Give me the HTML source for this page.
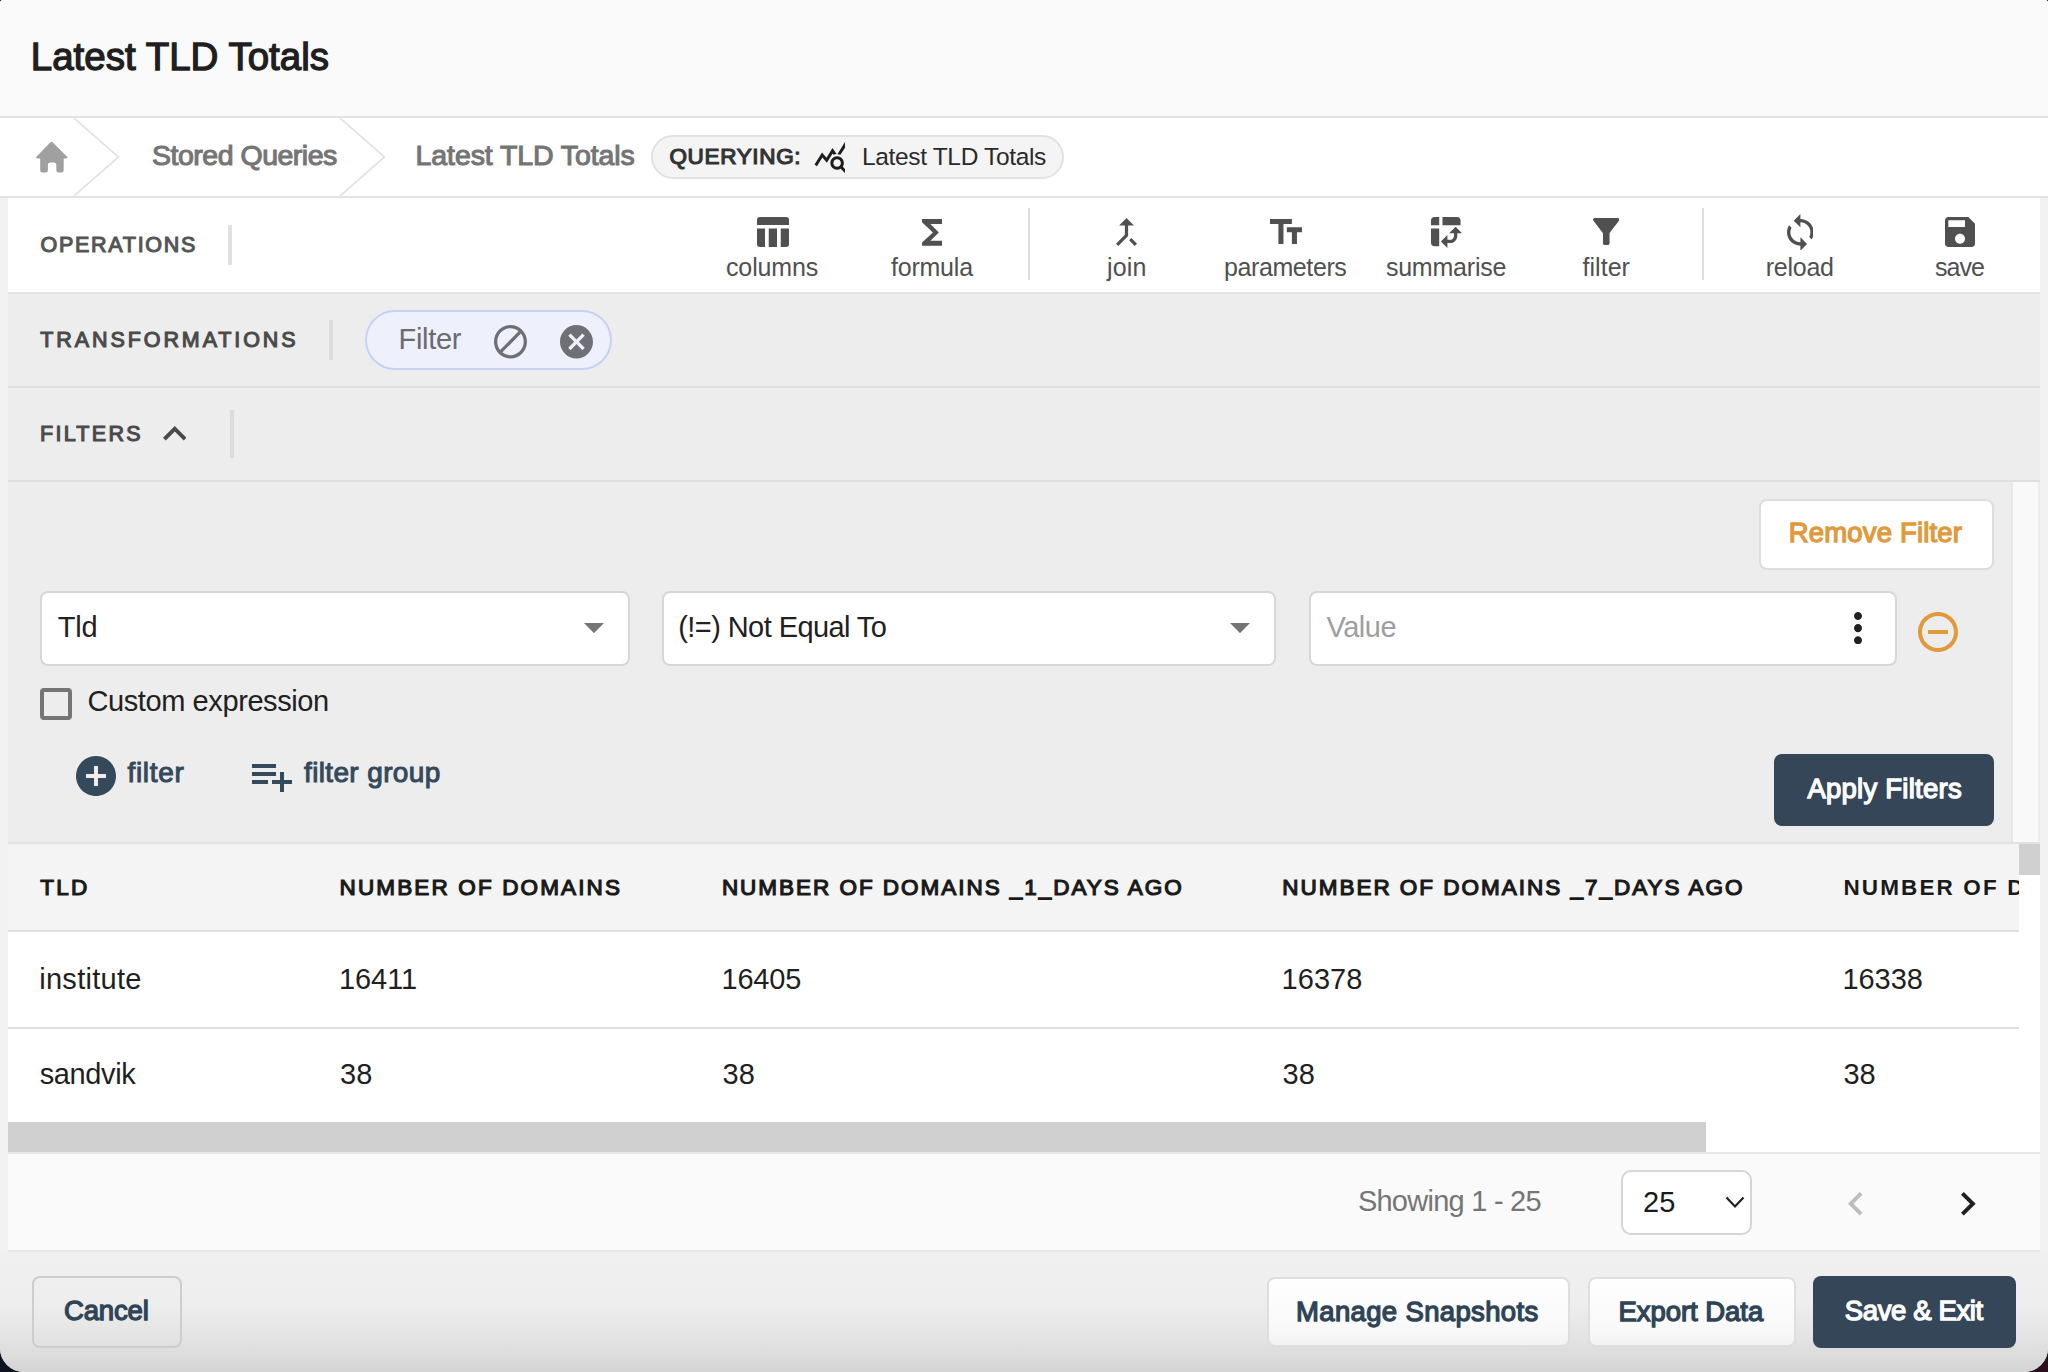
<!DOCTYPE html>
<html><head><meta charset="utf-8"><title>Latest TLD Totals</title>
<style>
html,body{margin:0;padding:0;}
body{width:2048px;height:1372px;overflow:hidden;position:relative;background:linear-gradient(to right,#0b1420 0,#0b1420 50%,#2a0f1f 50%,#2a0f1f 100%);font-family:"Liberation Sans",sans-serif;}
#modal{position:absolute;left:0;top:0;width:2048px;height:1372px;overflow:hidden;border-radius:3px 3px 24px 24px;background:#fafafa;}
.r{position:absolute;}
.t{position:absolute;white-space:nowrap;line-height:1;font-family:"Liberation Sans",sans-serif;}
</style></head><body><div id="modal">
<div class='r' style='left:0px;top:0px;width:2048px;height:116px;background:#fafafa;'></div>
<div class='r' style='left:0px;top:116px;width:2048px;height:2px;background:#e3e3e3;'></div>
<div class='t' style='left:30.8px;top:37.8px;font-size:38.5px;font-weight:400;letter-spacing:0.0px;color:#1f1f1f;-webkit-text-stroke:1.3px #1f1f1f;'>Latest TLD Totals</div>
<div class='r' style='left:0px;top:118px;width:2048px;height:78px;background:#ffffff;'></div>
<div class='r' style='left:0px;top:196px;width:2048px;height:2px;background:#e3e3e3;'></div>
<svg class='r' style='left:30px;top:136px;width:44px;height:42px' viewBox='30 136 44 42'><path fill='#a0a0a0' d='M50.2 142.4Q51.5 141.1 52.8 142.4L66.6 156.2Q68.3 158.1 66.2 158.6L63.7 158.6L63.7 170.1Q63.7 172.6 61.2 172.6L58.8 172.6Q56.3 172.6 56.3 170.1L56.3 165.1Q56.3 162.6 53.8 162.6L50.4 162.6Q47.9 162.6 47.9 165.1L47.9 170.1Q47.9 172.6 45.4 172.6L42.7 172.6Q40.2 172.6 40.2 170.1L40.2 158.6L37.3 158.6Q35.2 158.1 36.9 156.2Z'/></svg>
<svg class='r' style='left:0;top:118px;width:400px;height:78px' viewBox='0 0 400 78'><polyline points='74,0 118.5,39 74,78' fill='none' stroke='#e3e3e3' stroke-width='1.7'/><polyline points='340,0 384.5,39 340,78' fill='none' stroke='#e3e3e3' stroke-width='1.7'/></svg>
<div class='t' style='left:152px;top:141.0px;font-size:28.5px;font-weight:400;letter-spacing:-0.49px;color:#757575;-webkit-text-stroke:1.1px #757575;'>Stored Queries</div>
<div class='t' style='left:415.6px;top:141.0px;font-size:28.5px;font-weight:400;letter-spacing:-0.1px;color:#757575;-webkit-text-stroke:1.1px #757575;'>Latest TLD Totals</div>
<div class='r' style='left:651px;top:135px;width:413px;height:44px;background:#f4f4f4;border:2px solid #e2e2e2;box-sizing:border-box;border-radius:22px'></div>
<div class='t' style='left:669.4px;top:145.5px;font-size:22.5px;font-weight:400;letter-spacing:0.67px;color:#333333;-webkit-text-stroke:1.2px #333333;'>QUERYING:</div>
<div class='r' style='left:805px;top:130px;width:40px;height:50px;overflow:hidden'><svg class='r' style='left:7.899999999999977px;top:9.099999999999994px;width:36.0px;height:36.0px;' viewBox='0 0 24 24' preserveAspectRatio='none'><path fill='#1e1e1e' d='M19.88 18.47c.44-.7.7-1.51.7-2.39 0-2.49-2.01-4.5-4.5-4.5s-4.5 2.010-4.5 4.5 2.01 4.5 4.49 4.5c.88 0 1.7-.26 2.39-.7L21.590 23 23 21.59l-3.12-3.12zm-3.8.11c-1.38 0-2.5-1.12-2.5-2.5s1.12-2.5 2.5-2.5 2.5 1.12 2.5 2.5-1.12 2.5-2.5 2.5zm-.36-8.5c-.74.02-1.45.18-2.1.45l-.55-.83-3.8 6.18-3.01-3.52-3.63 5.81L1 17l5-8 3 3.5L13 6l2.72 4.08zm2.59.5c-.64-.28-1.33-.45-2.05-.49L21.38 2 23 3.18l-4.69 7.4z'/></svg></div>
<div class='t' style='left:862px;top:144.5px;font-size:24.5px;font-weight:400;letter-spacing:-0.34px;color:#2a2a2a;'>Latest TLD Totals</div>
<div class='r' style='left:0px;top:198px;width:2048px;height:1054px;background:#f2f2f2;'></div>
<div class='r' style='left:8px;top:198px;width:2032px;height:94px;background:#ffffff;'></div>
<div class='r' style='left:8px;top:292px;width:2032px;height:2px;background:#e4e4e4;'></div>
<div class='t' style='left:40.5px;top:234.9px;font-size:21.5px;font-weight:400;letter-spacing:1.72px;color:#555555;-webkit-text-stroke:1.1px #555555;'>OPERATIONS</div>
<div class='r' style='left:228px;top:225px;width:4px;height:40px;background:#e0e0e0;'></div>
<svg class='r' style='left:757px;top:217px;width:32px;height:30px' viewBox='0 0 32 30'><path fill='#505050' d='M3 0h26a3 3 0 0 1 3 3v5H0V3a3 3 0 0 1 3-3z M0 11.5h8v18.5H3a3 3 0 0 1-3-3z M11.75 11.5h8.25v18.5h-8.25z M23.75 11.5H32V27a3 3 0 0 1-3 3h-5.25z'/></svg>
<svg class='r' style='left:922px;top:218.75px;width:20.200000000000045px;height:26.849999999999994px;' viewBox='6 4 12 16' preserveAspectRatio='none'><path fill='#505050' d='M18 4H6v2l6.5 6L6 18v2h12v-3h-7l5-5-5-5h7z'/></svg>
<div class='r' style='left:1028px;top:208px;width:2px;height:72px;background:#e0e0e0;'></div>
<svg class='r' style='left:1115.6px;top:218px;width:21.0px;height:28px;' viewBox='5.59 3.5 12.82 16.91' preserveAspectRatio='none'><path fill='#505050' d='M17 20.41L18.41 19 15 15.59 13.59 17 17 20.41zM7.5 8H11v5.59L5.59 19 7 20.41l6-6V8h3.5L12 3.5 7.5 8z'/></svg>
<svg class='r' style='left:1270px;top:218.75px;width:32px;height:25.0px;' viewBox='2.5 4 19.0 15' preserveAspectRatio='none'><path fill='#505050' d='M2.5 4v3h5v12h3V7h5V4h-13zm19 5h-9v3h3v7h3v-7h3V9z'/></svg>
<svg class='r' style='left:1431px;top:217px;width:31.200000000000045px;height:31px;' viewBox='3 3 19 19' preserveAspectRatio='none'><path fill='#505050' d='M10 8h11V5c0-1.1-.9-2-2-2h-9v5zM3 8h5V3H5c-1.1 0-2 .9-2 2v3zm2 13h3V10H3v9c0 1.1.9 2 2 2zm8 1l-4-4 4-4zm1-9l4-4 4 4zm.58 6H13v-2h1.58c1.33 0 2.42-1.08 2.42-2.42V13h2v1.58c0 2.44-1.98 4.42-4.42 4.42z'/></svg>
<svg class='r' style='left:1592.7px;top:218.4px;width:26.5px;height:26.900000000000006px;' viewBox='4.0 4 16.0 16' preserveAspectRatio='none'><path fill='#505050' d='M4.25 5.61C6.27 8.2 10 13 10 13v6c0 .55.45 1 1 1h2c.55 0 1-.45 1-1v-6s3.72-4.8 5.74-7.39c.51-.66.04-1.61-.79-1.61H5.04c-.83 0-1.3.95-.79 1.61z'/></svg>
<div class='r' style='left:1702px;top:208px;width:2px;height:72px;background:#e0e0e0;'></div>
<svg class='r' style='left:1786.5px;top:213.5px;width:26.799999999999955px;height:36.69999999999999px;' viewBox='4 1 16 22' preserveAspectRatio='none'><path fill='#505050' d='M12 4V1L8 5l4 4V6c3.31 0 6 2.69 6 6 0 1.01-.25 1.97-.7 2.8l1.46 1.46C19.54 15.03 20 13.57 20 12c0-4.42-3.58-8-8-8zm0 14c-3.31 0-6-2.690-6-6 0-1.01.25-1.97.7-2.8L5.24 7.74C4.46 8.97 4 10.43 4 12c0 4.42 3.58 8 8 8v3l4-4-4-4v3z'/></svg>
<svg class='r' style='left:1945px;top:217px;width:30px;height:30px;' viewBox='3 3 18 18' preserveAspectRatio='none'><path fill='#505050' d='M17 3H5c-1.11 0-2 .9-2 2v14c0 1.1.89 2 2 2h14c1.1 0 2-.9 2-2V7l-4-4zm-5 16c-1.66 0-3-1.34-3-3s1.34-3 3-3 3 1.34 3 3-1.34 3-3 3zm3-10H5V5h10v4z'/></svg>
<div class='t' style='left:726px;top:255.0px;font-size:25px;font-weight:400;letter-spacing:-0.13px;color:#505050;'>columns</div>
<div class='t' style='left:891px;top:255.0px;font-size:25px;font-weight:400;letter-spacing:-0.22px;color:#505050;'>formula</div>
<div class='t' style='left:1107px;top:255.0px;font-size:25px;font-weight:400;letter-spacing:0.13px;color:#505050;'>join</div>
<div class='t' style='left:1224px;top:255.0px;font-size:25px;font-weight:400;letter-spacing:-0.4px;color:#505050;'>parameters</div>
<div class='t' style='left:1385.9px;top:255.0px;font-size:25px;font-weight:400;letter-spacing:-0.21px;color:#505050;'>summarise</div>
<div class='t' style='left:1582.5px;top:255.0px;font-size:25px;font-weight:400;letter-spacing:0.04px;color:#505050;'>filter</div>
<div class='t' style='left:1765.8px;top:255.0px;font-size:25px;font-weight:400;letter-spacing:-0.26px;color:#505050;'>reload</div>
<div class='t' style='left:1935px;top:255.0px;font-size:25px;font-weight:400;letter-spacing:-0.93px;color:#505050;'>save</div>
<div class='r' style='left:8px;top:294px;width:2032px;height:92px;background:#ededed;'></div>
<div class='r' style='left:8px;top:386px;width:2032px;height:2px;background:#dfdfdf;'></div>
<div class='t' style='left:40.3px;top:329.8px;font-size:21.5px;font-weight:400;letter-spacing:2.91px;color:#4a4a4a;-webkit-text-stroke:1.1px #4a4a4a;'>TRANSFORMATIONS</div>
<div class='r' style='left:329px;top:320px;width:4px;height:40px;background:#dcdcdc;'></div>
<div class='r' style='left:365px;top:310px;width:247px;height:59.5px;background:#eef0fb;border:2px solid #c8d0f6;box-sizing:border-box;border-radius:30px'></div>
<div class='t' style='left:398.5px;top:324.9px;font-size:29px;font-weight:400;letter-spacing:-0.3px;color:#6b6b70;'>Filter</div>
<svg class='r' style='left:494px;top:325px;width:33px;height:33.5px;' viewBox='2 2 20 20' preserveAspectRatio='none'><path fill='#6f6f73' d='M12 2C6.48 2 2 6.48 2 12s4.48 10 10 10 10-4.48 10-10S17.52 2 12 2zM4 12c0-4.42 3.58-8 8-8 1.85 0 3.55.63 4.9 1.69L5.69 16.9C4.63 15.55 4 13.85 4 12zm8 8c-1.85 0-3.55-.63-4.9-1.69L18.31 7.1C19.37 8.45 20 10.150 20 12c0 4.42-3.58 8-8 8z'/></svg>
<svg class='r' style='left:560px;top:325px;width:33px;height:33.5px;' viewBox='2 2 20 20' preserveAspectRatio='none'><path fill='#6f7075' d='M12 2C6.47 2 2 6.47 2 12s4.47 10 10 10 10-4.47 10-10S17.53 2 12 2zm5 13.59L15.59 17 12 13.41 8.41 17 7 15.590 10.59 12 7 8.41 8.41 7 12 10.59 15.59 7 17 8.41 13.41 12 17 15.59z'/></svg>
<div class='r' style='left:8px;top:388px;width:2032px;height:92px;background:#ededed;'></div>
<div class='r' style='left:8px;top:480px;width:2032px;height:2px;background:#dfdfdf;'></div>
<div class='t' style='left:40px;top:424.0px;font-size:21.5px;font-weight:400;letter-spacing:2.3px;color:#4a4a4a;-webkit-text-stroke:1.1px #4a4a4a;'>FILTERS</div>
<svg class='r' style='left:162.5px;top:426px;width:23.5px;height:14.600000000000023px;' viewBox='6 8 12 7.41' preserveAspectRatio='none'><path fill='#4a4a4a' d='M12 8l-6 6 1.41 1.41L12 10.83l4.59 4.58L18 14z'/></svg>
<div class='r' style='left:230px;top:410px;width:4px;height:48px;background:#dcdcdc;'></div>
<div class='r' style='left:8px;top:482px;width:2032px;height:360px;background:#ededed;'></div>
<div class='r' style='left:2011px;top:482px;width:27px;height:360px;background:#f9f9f9;'></div>
<div class='r' style='left:2011px;top:482px;width:2px;height:360px;background:#e8e8e8;'></div>
<div class='r' style='left:8px;top:842px;width:2032px;height:2px;background:#e2e2e2;'></div>
<div class='r' style='left:1758.5px;top:498.5px;width:235.0px;height:71.0px;background:#ffffff;border:2px solid #dddddd;box-sizing:border-box;border-radius:8px'></div>
<div class='t' style='left:1788.8px;top:519.1px;font-size:27.5px;font-weight:400;letter-spacing:0.17px;color:#e09a3c;-webkit-text-stroke:1.3px #e09a3c;'>Remove Filter</div>
<div class='r' style='left:40px;top:590.5px;width:589.5px;height:75.0px;background:#ffffff;border:2px solid #d7d7d7;box-sizing:border-box;border-radius:8px'></div>
<div class='t' style='left:57.8px;top:612.6px;font-size:29px;font-weight:400;letter-spacing:-0.25px;color:#212121;'>Tld</div>
<svg class='r' style='left:584px;top:622.8px;width:20px;height:10.200000000000045px;' viewBox='7 10 10 5' preserveAspectRatio='none'><path fill='#757575' d='M7 10l5 5 5-5z'/></svg>
<div class='r' style='left:662px;top:590.5px;width:613.5px;height:75.0px;background:#ffffff;border:2px solid #d7d7d7;box-sizing:border-box;border-radius:8px'></div>
<div class='t' style='left:678.3px;top:612.6px;font-size:29px;font-weight:400;letter-spacing:-0.58px;color:#212121;'>(!=) Not Equal To</div>
<svg class='r' style='left:1230px;top:622.8px;width:20px;height:10.200000000000045px;' viewBox='7 10 10 5' preserveAspectRatio='none'><path fill='#757575' d='M7 10l5 5 5-5z'/></svg>
<div class='r' style='left:1308.5px;top:590.5px;width:588.5px;height:75.0px;background:#ffffff;border:2px solid #d7d7d7;box-sizing:border-box;border-radius:8px'></div>
<div class='t' style='left:1326.5px;top:612.8px;font-size:29px;font-weight:400;letter-spacing:-0.5px;color:#9e9e9e;'>Value</div>
<svg class='r' style='left:1854px;top:611.5px;width:8px;height:32.299999999999955px;' viewBox='10 4 4 16' preserveAspectRatio='none'><path fill='#212121' d='M12 8c1.1 0 2-.9 2-2s-.9-2-2-2-2 .9-2 2 .9 2 2 2zm0 2c-1.1 0-2 .9-2 2s.9 2 2 2 2-.9 2-2-.9-2-2-2zm0 6c-1.1 0-2 .9-2 2s.9 2 2 2 2-.9 2-2-.9-2-2-2z'/></svg>
<svg class='r' style='left:1918px;top:612px;width:40px;height:40px;' viewBox='2 2 20 20' preserveAspectRatio='none'><path fill='#e09a3c' d='M7 11v2h10v-2H7zm5-9C6.48 2 2 6.48 2 12s4.48 10 10 10 10-4.48 10-10S17.52 2 12 2zm0 18c-4.41 0-8-3.59-8-8s3.59-8 8-8 8 3.59 8 8-3.59 8-8 8z'/></svg>
<div class='r' style='left:40px;top:688px;width:32px;height:32px;background:transparent;border:4px solid #757575;box-sizing:border-box;border-radius:4px'></div>
<div class='t' style='left:87.5px;top:686.8px;font-size:29px;font-weight:400;letter-spacing:-0.41px;color:#212121;'>Custom expression</div>
<svg class='r' style='left:76px;top:756px;width:40px;height:40px;' viewBox='2 2 20 20' preserveAspectRatio='none'><path fill='#34495a' d='M12 2C6.48 2 2 6.48 2 12s4.48 10 10 10 10-4.48 10-10S17.52 2 12 2zm5 11h-4v4h-2v-4H7v-2h4V7h2v4h4v2z'/></svg>
<div class='t' style='left:127.4px;top:759.0px;font-size:28px;font-weight:400;letter-spacing:0.72px;color:#34495a;-webkit-text-stroke:1.0px #34495a;'>filter</div>
<svg class='r' style='left:252.4px;top:763.8px;width:39.99999999999997px;height:28.0px;' viewBox='2 6 20 14' preserveAspectRatio='none'><path fill='#34495a' d='M14 10H2v2h12v-2zm0-4H2v2h12V6zm4 8v-4h-2v4h-4v2h4v4h2v-4h4v-2h-4zM2 16h8v-2H2v2z'/></svg>
<div class='t' style='left:304px;top:759.0px;font-size:28px;font-weight:400;letter-spacing:0.36px;color:#34495a;-webkit-text-stroke:1.0px #34495a;'>filter group</div>
<div class='r' style='left:1774px;top:754px;width:220px;height:72px;background:#344657;border-radius:8px'></div>
<div class='t' style='left:1807.4px;top:775.3px;font-size:27.5px;font-weight:400;letter-spacing:0.25px;color:#ffffff;-webkit-text-stroke:1.3px #ffffff;'>Apply Filters</div>
<div class='r' style='left:8px;top:844px;width:2010.6px;height:86px;background:#f4f4f4;'></div>
<div class='r' style='left:8px;top:930px;width:2010.6px;height:2px;background:#e0e0e0;'></div>
<div class='r' style='left:8px;top:932px;width:2010.6px;height:95px;background:#ffffff;'></div>
<div class='r' style='left:8px;top:1027px;width:2010.6px;height:2px;background:#e0e0e0;'></div>
<div class='r' style='left:8px;top:1029px;width:2010.6px;height:93px;background:#ffffff;'></div>
<div class='r' style='left:8px;top:1122px;width:2010.6px;height:30px;background:#ffffff;'></div>
<div class='r' style='left:8px;top:1122px;width:1698px;height:30px;background:#d0d0d0;'></div>
<div class='r' style='left:2018.6px;top:844px;width:21.40000000000009px;height:308px;background:#ffffff;'></div>
<div class='r' style='left:2018.6px;top:844px;width:21.40000000000009px;height:31px;background:#d0d0d0;'></div>
<div class='r' style='left:8px;top:844px;width:2010.6px;height:90px;overflow:hidden'>
<div style='position:absolute;left:-8px;top:-844px'>
<div class='t' style='left:40.2px;top:876.9px;font-size:22.5px;font-weight:400;letter-spacing:2.33px;color:#1a1a1a;-webkit-text-stroke:1.2px #1a1a1a;'>TLD</div>
<div class='t' style='left:339.5px;top:876.9px;font-size:22.5px;font-weight:400;letter-spacing:2.14px;color:#1a1a1a;-webkit-text-stroke:1.2px #1a1a1a;'>NUMBER OF DOMAINS</div>
<div class='t' style='left:721.9px;top:876.9px;font-size:22.5px;font-weight:400;letter-spacing:1.97px;color:#1a1a1a;-webkit-text-stroke:1.2px #1a1a1a;'>NUMBER OF DOMAINS _1_DAYS AGO</div>
<div class='t' style='left:1282.2px;top:876.9px;font-size:22.5px;font-weight:400;letter-spacing:1.99px;color:#1a1a1a;-webkit-text-stroke:1.2px #1a1a1a;'>NUMBER OF DOMAINS _7_DAYS AGO</div>
<div class='t' style='left:1843.4px;top:876.9px;font-size:22.5px;font-weight:700;letter-spacing:2.14px;color:#1a1a1a'>NUMBER OF DOMAINS _14_DAYS AGO</div>
</div></div>
<div class='t' style='left:39.2px;top:964.7px;font-size:29px;font-weight:400;letter-spacing:0.29px;color:#1f1f1f;'>institute</div>
<div class='t' style='left:339px;top:964.7px;font-size:29px;font-weight:400;letter-spacing:-0.08px;color:#1f1f1f;'>16411</div>
<div class='t' style='left:721.5px;top:964.7px;font-size:29px;font-weight:400;letter-spacing:-0.2px;color:#1f1f1f;'>16405</div>
<div class='t' style='left:1281.5px;top:964.7px;font-size:29px;font-weight:400;letter-spacing:0.07px;color:#1f1f1f;'>16378</div>
<div class='t' style='left:1842.4px;top:964.7px;font-size:29px;font-weight:400;letter-spacing:-0.03px;color:#1f1f1f;'>16338</div>
<div class='t' style='left:39.7px;top:1060.4px;font-size:29px;font-weight:400;letter-spacing:-0.37px;color:#1f1f1f;'>sandvik</div>
<div class='t' style='left:340px;top:1060.4px;font-size:29px;font-weight:400;letter-spacing:0.0px;color:#1f1f1f'>38</div>
<div class='t' style='left:722.5px;top:1060.4px;font-size:29px;font-weight:400;letter-spacing:0.0px;color:#1f1f1f'>38</div>
<div class='t' style='left:1282.5px;top:1060.4px;font-size:29px;font-weight:400;letter-spacing:0.0px;color:#1f1f1f'>38</div>
<div class='t' style='left:1843.4px;top:1060.4px;font-size:29px;font-weight:400;letter-spacing:0.0px;color:#1f1f1f'>38</div>
<div class='r' style='left:8px;top:1152px;width:2032px;height:2px;background:#e6e6e6;'></div>
<div class='r' style='left:8px;top:1154px;width:2032px;height:96px;background:#fafafa;'></div>
<div class='r' style='left:8px;top:1250px;width:2032px;height:2px;background:#e6e6e6;'></div>
<div class='t' style='left:1357.9px;top:1187.0px;font-size:29px;font-weight:400;letter-spacing:-0.75px;color:#757575;'>Showing 1 - 25</div>
<div class='r' style='left:1621px;top:1170px;width:130.5px;height:64.5px;background:#ffffff;border:2px solid #d5d5d5;box-sizing:border-box;border-radius:10px'></div>
<div class='t' style='left:1643px;top:1187.9px;font-size:29px;font-weight:400;letter-spacing:0.0px;color:#1a1a1a;'>25</div>
<svg class='r' style='left:1725px;top:1196px;width:20px;height:13px' viewBox='0 0 20 13'><polyline points='1.5,1.5 10,10.5 18.5,1.5' fill='none' stroke='#222' stroke-width='2.2'/></svg>
<svg class='r' style='left:1848.4px;top:1192.3px;width:14.5px;height:23.40000000000009px;' viewBox='8 6 7.41 12' preserveAspectRatio='none'><path fill='#bdbdbd' d='M15.41 7.41L14 6l-6 6 6 6 1.41-1.41L10.83 12z'/></svg>
<svg class='r' style='left:1961.2px;top:1192.3px;width:14.700000000000045px;height:23.40000000000009px;' viewBox='8.59 6 7.41 12' preserveAspectRatio='none'><path fill='#212121' d='M10 6L8.59 7.41 13.17 12l-4.58 4.59L10 18l6-6z'/></svg>
<div class='r' style='left:0px;top:1252px;width:2048px;height:120px;background:linear-gradient(to bottom,#f0f0f0 0px,#eeeeee 50px,#e2e2e2 90px,#d4d4d4 120px);'></div>
<div class='r' style='left:32px;top:1276px;width:149.5px;height:71.5px;background:transparent;border:2px solid #cdcdcd;box-sizing:border-box;border-radius:8px'></div>
<div class='t' style='left:64px;top:1297.2px;font-size:27.5px;font-weight:400;letter-spacing:-0.16px;color:#2f4456;-webkit-text-stroke:1.3px #2f4456;'>Cancel</div>
<div class='r' style='left:1267px;top:1277px;width:303px;height:69.5px;background:linear-gradient(#ffffff,#f9f9f9 70%,#f2f2f2);border:2px solid #dedede;box-sizing:border-box;border-radius:8px'></div>
<div class='t' style='left:1296px;top:1297.5px;font-size:27.5px;font-weight:400;letter-spacing:0.35px;color:#2f4456;-webkit-text-stroke:1.3px #2f4456;'>Manage Snapshots</div>
<div class='r' style='left:1588.4px;top:1277px;width:207.29999999999995px;height:69.5px;background:linear-gradient(#ffffff,#f9f9f9 70%,#f2f2f2);border:2px solid #dedede;box-sizing:border-box;border-radius:8px'></div>
<div class='t' style='left:1618.4px;top:1297.5px;font-size:27.5px;font-weight:400;letter-spacing:-0.04px;color:#2f4456;-webkit-text-stroke:1.3px #2f4456;'>Export Data</div>
<div class='r' style='left:1813px;top:1276px;width:203px;height:72px;background:#344657;border-radius:8px'></div>
<div class='t' style='left:1844.8px;top:1297.4px;font-size:27.5px;font-weight:400;letter-spacing:-0.38px;color:#ffffff;-webkit-text-stroke:1.3px #ffffff;'>Save &amp; Exit</div>
</div></body></html>
